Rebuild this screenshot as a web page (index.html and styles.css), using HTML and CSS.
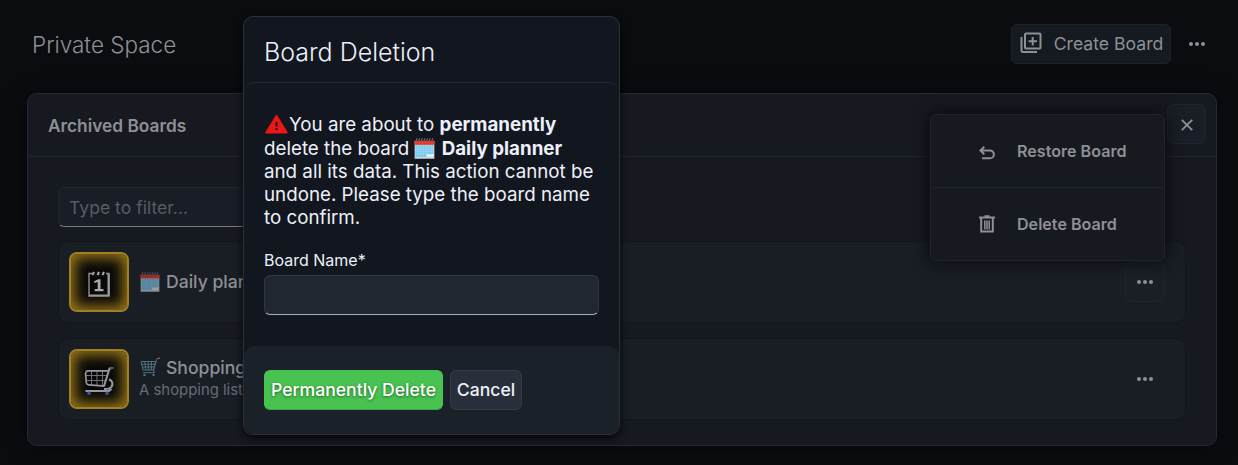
FILE: index.html
```html
<!DOCTYPE html>
<html lang="en">
<head>
    <meta charset="UTF-8">
    <title>Private Space</title>
    <link rel="stylesheet" href="styles.css">
</head>
<body>
    <!-- shared icons -->
    <svg class="symbols" width="0" height="0">
        <symbol id="dots" viewBox="0 0 16 4">
            <circle cx="2" cy="2" r="2"/><circle cx="8" cy="2" r="2"/><circle cx="14" cy="2" r="2"/>
        </symbol>
        <symbol id="calendar" viewBox="0 0 20 20">
            <path fill="#9da5a9" d="M.5 3h19v17H.5z"/>
            <path fill="#edf3f4" d="M1.200 6h17.600v12.700H1.200z"/>
            <path fill="#e43b31" d="M.5 2.500h19V6.500H.5z"/>
            <path fill="#74c7ef" d="M1.500 7h17v8h-1v3h-16z"/>
            <path stroke="#b9e4f8" stroke-width=".4" d="M1.500 9h17M1.500 11h17M1.500 13h17M1.500 15h12M4 7v11M6.500 7v11M9 7v11M11.500 7v11M14 7v8M16.500 7v8"/>
            <path fill="#edf3f4" d="M12 15.500h6.500v2.500H12z"/>
            <path stroke="#6d8f97" stroke-width=".9" d="M2 2.500l1-2.300M4.500 2.500l1-2.300M7 2.500l1-2.300M9.500 2.500l1-2.300M12 2.500l1-2.300M14.500 2.500l1-2.300M17 2.500l1-2.300"/>
        </symbol>
        <symbol id="cart" viewBox="0 0 20 20">
            <path fill="none" stroke="#5d8792" stroke-width="1" d="M1 4.500h14.500l-2 8.500H3L1 4.500zM1.500 7.200h13M2.300 10h12M4.500 4.500l1.500 8.500M8 4.500l.7 8.500M11.500 4.500v8.500M13.500 13l3.500-11.500h1.500M13.500 13l1 2.700H3"/>
            <path fill="none" stroke="#e0453c" stroke-width="1.500" d="M18 1.200h2"/>
            <circle cx="4.500" cy="18" r="1.200" fill="#5d8792"/><circle cx="13.500" cy="18" r="1.200" fill="#5d8792"/>
        </symbol>
    </svg>

    <header class="topbar">
        <h1>Private Space</h1>
        <button class="btn create">
            <svg width="22" height="22" viewBox="0 0 22 22" fill="none" stroke="currentColor" stroke-width="2">
                <rect x="5" y="1.500" width="15.500" height="15" rx="1"/>
                <path d="M1.500 5v13.500a1.500 1.500 0 0 0 1.500 1.500H17M12.700 5v8.500M8.500 9.200H17"/>
            </svg>
            Create Board
        </button>
        <button class="dots"><svg width="16" height="4"><use href="#dots"/></svg></button>
    </header>

    <section class="panel">
        <div class="panel-head">
            <h2>Archived Boards</h2>
            <button class="btn close">
                <svg width="12" height="12" viewBox="0 0 12 12" fill="none" stroke="currentColor" stroke-width="1.900"><path d="M.8.8l10.400 10.400M11.200.8L.8 11.200"/></svg>
            </button>
        </div>
        <div class="panel-body">
            <input class="filter" type="text" placeholder="Type to filter...">

            <div class="board">
                <div class="tile">
                    <svg width="24" height="28" viewBox="0 0 24 28">
                        <path fill="none" stroke="#999" stroke-width="1.300" d="M2 3.500h20V26H2z"/>
                        <path fill="#999" d="M20.500 4h2.200v22h-2.200zM2 24.500h20V26H2z"/>
                        <path stroke="#080808" stroke-width="2" d="M5 3.500h14"/>
                        <path stroke="#b0b0b0" stroke-width="1.800" d="M5.500 5l1.500-3M10.500 5l1.500-3M15.500 5l1.500-3"/>
                        <path fill="#aaa" d="M7.200 11.200l4.300-2h2v9.900h3v2.200H7.700v-2.200h3v-7l-3.500 1z"/>
                    </svg>
                </div>
                <div class="info">
                    <p class="name"><svg class="emoji" width="20" height="20"><use href="#calendar"/></svg> Daily planner</p>
                </div>
                <button class="btn more"><svg width="16" height="4"><use href="#dots"/></svg></button>
            </div>

            <div class="board">
                <div class="tile">
                    <svg width="30" height="30" viewBox="0 0 30 30" fill="none">
                        <path stroke="#716e73" stroke-width="1" d="M2 9.500h21M2.500 14.500h20M7.500 5v14M13 5v14.500M18.500 5v14.500"/>
                        <path stroke="#9a969c" stroke-width="1.700" d="M3.500 4.800H24M2 7q0-2.200 2-2.200M1.500 7l.8 9.500q.3 2.200 2.700 2.400l15.500 1.300"/>
                        <path stroke="#9a969c" stroke-width="2" d="M20 20.300L25.500 2.500h2M25 13.500c4.500 1.500 4.500 7 .5 8.800-1.500.7-3.500.7-5.500.7M1.500 25h23.500l2.500-2"/>
                        <path stroke="#2d5c9e" stroke-width="2.200" d="M26 2h3.500"/>
                        <circle cx="5" cy="27.200" r="1.800" fill="#2d5c9e"/><circle cx="23" cy="27.200" r="1.800" fill="#2d5c9e"/>
                    </svg>
                </div>
                <div class="info">
                    <p class="name"><svg class="emoji dim" width="20" height="20"><use href="#cart"/></svg> Shopping list</p>
                    <p class="desc">A shopping list</p>
                </div>
                <button class="dots"><svg width="16" height="4"><use href="#dots"/></svg></button>
            </div>
        </div>
    </section>

    <!-- board context menu -->
    <div class="menu">
        <div class="menu-item">
            <svg class="undo" width="16" height="14" viewBox="0 0 16 14" fill="none" stroke="currentColor" stroke-width="2"><path d="M5.300.8L1.500 4.500l3.800 3.700M1.800 4.500H11a3.900 3.900 0 0 1 0 7.800H3"/></svg>
            Restore Board
        </div>
        <div class="menu-item">
            <svg width="16" height="19" viewBox="0 0 16 19" fill="none" stroke="currentColor"><path stroke-width="2" d="M0 2.500h16M2.200 3v13.600h11.600V3M5.500 1.200h5"/><path stroke-width="1.500" d="M5.800 5.500v9M8 5.500v9M10.200 5.500v9"/></svg>
            Delete Board
        </div>
    </div>

    <!-- delete dialog -->
    <div class="dialog">
        <h2 class="dialog-head">Board Deletion</h2>
        <div class="dialog-body">
            <p class="warning"><svg class="alert" width="23" height="20" viewBox="0 0 23 20"><path fill="#eb1616" stroke="#eb1616" stroke-width="2" stroke-linejoin="round" d="M11.500 2L21.700 18.500H1.300z"/><path stroke="#12161f" stroke-width="2" d="M11.500 8v4.500M11.500 14v2"/></svg>You are about to <strong>permanently</strong> delete the board <svg class="emoji" width="21" height="21"><use href="#calendar"/></svg> <strong>Daily planner</strong> and all its data. This action cannot be undone. Please type the board name to confirm.</p>
            <label for="boardName">Board Name*</label>
            <input id="boardName" type="text">
        </div>
        <div class="dialog-foot">
            <button class="btn delete">Permanently Delete</button>
            <button class="btn cancel">Cancel</button>
        </div>
    </div>
</body>
</html>
```
FILE: styles.css
```css
* {box-sizing: border-box}
body {margin: 0; height: 465px; overflow: hidden; background: #0a0c10; color: #8e9096;
      font-family: Inter, "Liberation Sans", sans-serif; font-size: 17.600px}
h1, h2, p {margin: 0}
button, input {font: inherit; color: inherit}
button {display: flex; align-items: center; justify-content: center; padding: 0; border: 0; background: none}
svg {display: block; flex: none}
svg use {fill: currentColor}
.symbols {position: absolute}
.emoji {display: inline-block}

.topbar {display: flex; align-items: center; height: 93px; padding: 0 21px 5px 32px}
.topbar h1 {flex: 1; padding-top: 2px; font-size: 22.500px; font-weight: 300; line-height: 28px}
.btn {height: 40px; border: 1px solid #1f242d; border-radius: 6px; background: #191d25}
.create {width: 160px; gap: 12px; padding: 0 0 2px 1px; background: #151a21; border-color: #1c2129}
.dots {width: 40px; height: 40px}
.topbar .dots {margin-left: 6px; width: 40px}

.panel {width: 1190px; height: 353px; margin-left: 27px; border: 1px solid #242a34; border-radius: 10px;
        background: #161920; box-shadow: 0 0 20px rgba(0,0,0,0.5)}
.panel-head {display: flex; justify-content: space-between; height: 63px; padding: 10px 10px 0 20px; border-bottom: 1px solid #20242d}
.panel-head h2 {font-size: 17.300px; font-weight: 600; line-height: 43px}
.close {width: 39px; padding-top: 1px}
.panel-body {padding: 30px 30px 0}
.filter {display: block; width: 300px; height: 40px; margin-bottom: 14px; padding: 1px 10px 0; border: 1px solid #20252d;
         border-bottom-color: #77797d; border-radius: 6px; background: #191d25}
.filter::placeholder {color: #595c63}

.board {display: flex; align-items: center; height: 82px; margin-bottom: 15px; padding: 0 20px 0 10px;
        border: 1px solid #12161b; border-radius: 10px; background: #191d24}
.tile {display: flex; align-items: center; justify-content: center; width: 60px; height: 60px; margin-right: 11px;
       border: 2px solid #a17f25; border-radius: 8px; background: #080808; box-shadow: inset 0 0 13px 4px #987719}
.tile svg {margin-top: 3px}
.info {flex: 1; padding-bottom: 1px}
.name {display: flex; align-items: center; gap: 6px; font-size: 17.600px; font-weight: 500; line-height: 23px}
.info .emoji {opacity: .6}
.info .emoji.dim {opacity: .8}
.desc {margin-left: -1px; font-size: 14.900px; line-height: 23px; color: #686b77}
.more {width: 40px; background: #1a1e25}

.menu {position: absolute; left: 930px; top: 114px; width: 235px; height: 147px; border: 1px solid #20242e; border-radius: 6px;
       background: #161920; box-shadow: 0 0 16px 2px rgba(0,0,0,0.6)}
.menu-item {display: flex; align-items: center; gap: 22px; height: 72px; margin: 0 1px; padding-left: 47px; font-size: 16.100px; font-weight: 600}
.menu-item + .menu-item {height: 73px; border-top: 1px solid #20242d}
.undo {margin-top: 3px}

.dialog {position: absolute; left: 243px; top: 16px; width: 377px; height: 419px; border: 1px solid #2a313d; border-radius: 10px;
         background: #12161e; color: #edf0fa; box-shadow: 0 3px 9px rgba(0,0,0,0.8)}
.dialog-head {height: 65px; padding-left: 20px; font-size: 25px; font-weight: 300; line-height: 70px}
.dialog-body {height: 264px; padding: 30.400px 20px 0; border-top: 1px solid #242936; border-radius: 10px 10px 0 0}
.warning {font-size: 18.750px; line-height: 23.200px}
.warning .emoji {margin: 0 1px 0 0; vertical-align: -4px}
.alert {display: inline-block; vertical-align: -3px; margin: 0 1px}
.dialog label {display: block; margin-top: 19px; font-size: 16px; line-height: 24px}
.dialog input {display: block; width: 335px; height: 40px; margin-top: 3px; border: 1px solid #303743;
               border-bottom-color: #aaadb0; border-radius: 6px; background: #212730}
.dialog-foot {display: flex; gap: 7px; height: 88px; padding: 24px 20px; border-radius: 10px; background: #1b2129}
.dialog-foot .btn {padding-bottom: 2px}
.delete {width: 179px; border-color: #48c351; border-bottom-color: #3aa54a; background: #48c351; color: #fff;
         font-weight: 530; text-shadow: 0 1px 3px rgba(0,0,0,0.5)}
.cancel {width: 72px; border-color: #343b48; background: #292f3a; font-weight: 500; color: #edf0fa}
```
